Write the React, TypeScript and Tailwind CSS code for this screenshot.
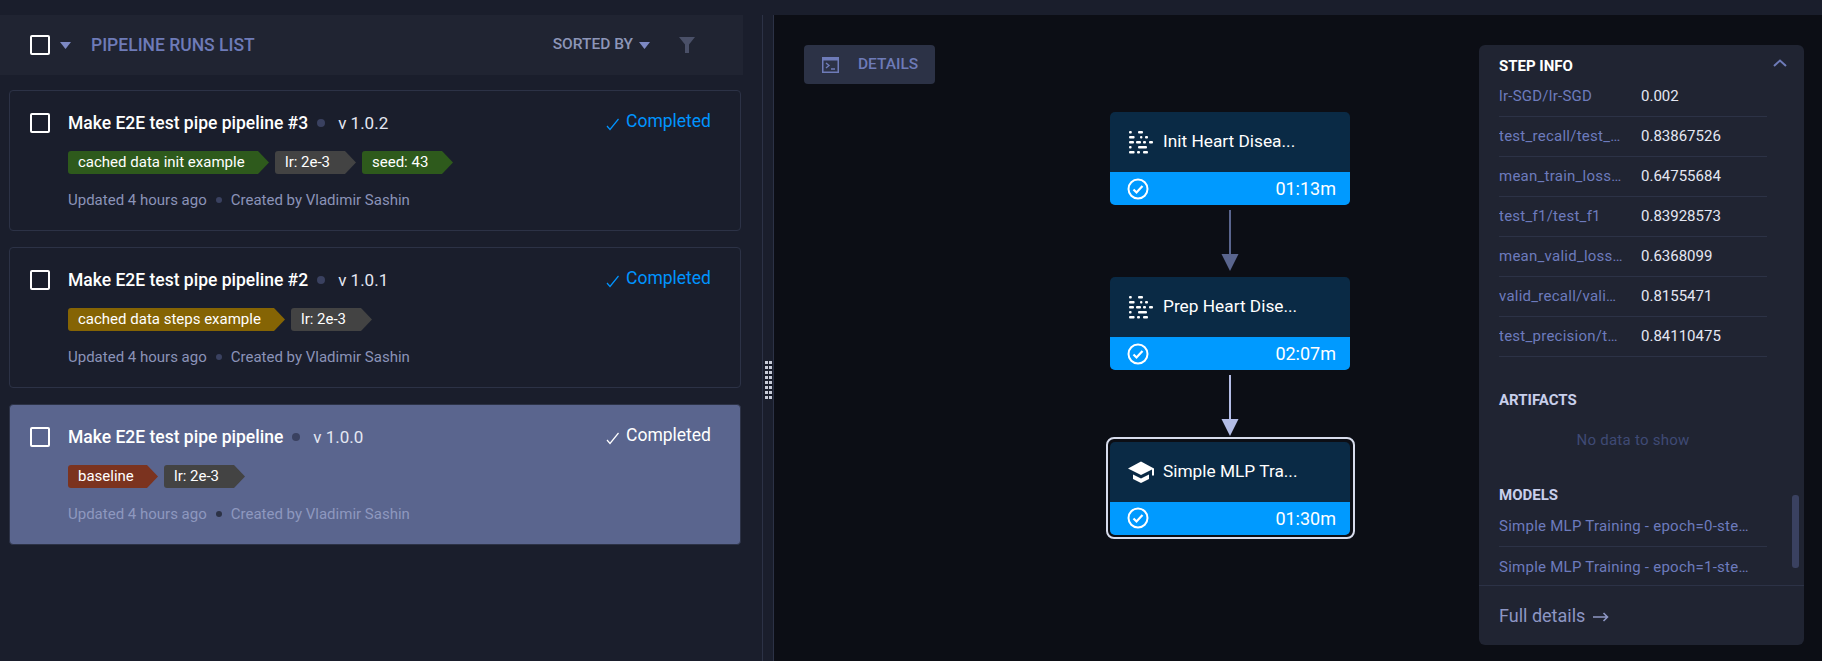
import React from "react";

const Check = ({ cls }: { cls: string }) => (
  <svg width="14" height="14" viewBox="0 0 14 14" className={cls} fill="none" stroke="currentColor" strokeWidth="1.2">
    <path d="M1 9l3 3.5L12.5 2" />
  </svg>
);

const Box = () => <span className="block w-[20px] h-[20px] border-2 border-white rounded-[2px] shrink-0" />;

const Caret = ({ cls }: { cls: string }) => (
  <svg width="11" height="7" viewBox="0 0 11 7" className={cls} fill="currentColor">
    <path d="M0 0h11L5.5 7z" />
  </svg>
);

type Tag = { t: string; w: string; c: string };

const Card = ({
  title, ver, tags, sel,
}: { title: string; ver: string; tags: Tag[]; sel?: boolean }) => (
  <div className={`h-[141px] rounded-[4px] border flex pl-[20px] pr-[29px] pt-[19px] ${sel ? "bg-[#5a658e] border-[#2c3246]" : "border-[#2c3246]"}`}>
    <div className="pt-[3px] w-[38px] shrink-0"><Box /></div>
    <div className="flex-1 min-w-0">
      <div className="flex items-start justify-between">
        <div className="flex items-center h-[24px] mt-[1px]">
          <span className="text-[17.5px] font-medium text-white leading-[24px]">{title}</span>
          <span className="w-[8px] h-[8px] rounded-full ml-[9px] mr-[13px] bg-[#3a4160]" />
          <span className="text-[17px] text-[#e4e7f2] leading-[24px]">{ver}</span>
        </div>
        <div className={`flex items-center h-[24px] -mt-[1px] ${sel ? "text-white" : "text-[#0094ff]"}`}>
          <Check cls="mr-[6px] mt-[5px]" />
          <span className="text-[17.5px] leading-[24px]">Completed</span>
        </div>
      </div>
      <div className="flex gap-[6px] mt-[16px]">
        {tags.map((g) => (
          <span
            key={g.t}
            className={`h-[23px] pl-[10px] flex items-center text-[15px] text-white rounded-l-[3px] [clip-path:polygon(0_0,calc(100%-11px)_0,100%_50%,calc(100%-11px)_100%,0_100%)] ${g.w} ${g.c}`}
          >
            {g.t}
          </span>
        ))}
      </div>
      <div className={`flex items-center h-[20px] mt-[16px] text-[15px] ${sel ? "text-[#8e98bf]" : "text-[#8b93b8]"}`}>
        <span>Updated 4 hours ago</span>
        <span className={`w-[6px] h-[6px] rounded-full mx-[9px] ${sel ? "bg-[#2c3246]" : "bg-[#3a4160]"}`} />
        <span>Created by Vladimir Sashin</span>
      </div>
    </div>
  </div>
);

const DataIcon = () => (
  <svg width="24" height="24" viewBox="0 0 24 24" fill="#fff" className="shrink-0">
    <rect x="0" y="1" width="2.8" height="2.4" rx="1" />
    <rect x="9" y="1" width="5" height="2.4" rx="1" />
    <rect x="0" y="6" width="5.6" height="2.4" rx="1" />
    <rect x="11" y="6" width="2.4" height="2.4" rx="1" />
    <rect x="16" y="6" width="3" height="2.4" rx="1" />
    <rect x="0" y="11" width="5" height="2.4" rx="1" />
    <rect x="7" y="11" width="5" height="2.4" rx="1" />
    <rect x="14" y="11" width="3" height="2.4" rx="1" />
    <rect x="20" y="11" width="4" height="2.4" rx="1" />
    <rect x="0" y="16" width="2.6" height="2.4" rx="1" />
    <rect x="9" y="16" width="9" height="2.4" rx="1" />
    <rect x="0" y="21" width="5.6" height="2.4" rx="1" />
    <rect x="8" y="21" width="3" height="2.4" rx="1" />
    <rect x="14" y="21" width="5" height="2.4" rx="1" />
  </svg>
);

const HatIcon = () => (
  <svg width="28" height="22" viewBox="0 0 28 22" fill="#fff" className="shrink-0">
    <path d="M14 0.5L1 7.5L14 14L25 8.5v6h2V7.5z" />
    <path d="M6 13.5v4.5L14 22L22 18v-4.5l-8 4z" />
  </svg>
);

const CircleCheck = () => (
  <svg width="22" height="22" viewBox="0 0 22 22" fill="none" stroke="#fff" strokeWidth="2" className="shrink-0">
    <circle cx="11" cy="11" r="9.5" />
    <path d="M6.5 11.5l3 3 6-6.5" strokeWidth="2.2" />
  </svg>
);

const Node = ({ label, time, hat }: { label: string; time: string; hat?: boolean }) => (
  <div className="w-[240px] h-[93px] rounded-[5px] overflow-hidden bg-[#0a2a45] flex flex-col shrink-0">
    <div className={`h-[60px] flex items-center text-white text-[17.3px] ${hat ? "pl-[17px]" : "pl-[19px]"}`}>
      <span className={`shrink-0 ${hat ? "w-[36px]" : "w-[34px]"}`}>{hat ? <HatIcon /> : <DataIcon />}</span>
      <span>{label}</span>
    </div>
    <div className="h-[33px] bg-[#009aff] flex items-center justify-between pl-[17px] pr-[14px] text-white text-[18px]">
      <CircleCheck />
      <span>{time}</span>
    </div>
  </div>
);

const Arrow = ({ cls, h }: { cls: string; h: number }) => (
  <svg width="18" height={h} viewBox={`0 0 18 ${h}`} className={`block ml-[115px] ${cls}`} fill="currentColor">
    <rect x="8" y="0" width="2" height={h - 15} />
    <path d={`M0.5 ${h - 17}h17L9 ${h}z`} />
  </svg>
);

const metrics: [string, string][] = [
  ["lr-SGD/lr-SGD", "0.002"],
  ["test_recall/test_recall", "0.83867526"],
  ["mean_train_loss/mean_train_loss", "0.64755684"],
  ["test_f1/test_f1", "0.83928573"],
  ["mean_valid_loss/mean_valid_loss", "0.6368099"],
  ["valid_recall/valid_recall", "0.8155471"],
  ["test_precision/test_precision", "0.84110475"],
];

export default function App() {
  return (
    <div className="w-[1822px] h-[661px] overflow-hidden flex flex-col bg-[#1a1e2c] font-['Roboto',sans-serif]">
      <div className="h-[15px] shrink-0 bg-[#1a1e2c]" />
      <div className="flex-1 flex min-h-0">
        <div className="w-[762px] shrink-0">
          <div className="w-[743px] h-[60px] bg-[#202432] flex items-center pl-[30px]">
            <Box />
            <Caret cls="text-[#7d89c4] ml-[10px]" />
            <span className="ml-[20px] text-[17.5px] font-medium text-[#6e7bb8]">PIPELINE RUNS LIST</span>
            <span className="ml-auto text-[15.5px] font-medium text-[#8d96b8]">SORTED BY</span>
            <Caret cls="text-[#7d89c4] ml-[6px]" />
            <svg width="16" height="16" viewBox="0 0 16 16" className="ml-[29px] mr-[48px] text-[#4a5068]" fill="currentColor">
              <path d="M0 0h16L10 7.5V16H6V7.5z" />
            </svg>
          </div>
          <div className="flex flex-col gap-[16px] pl-[9px] w-[741px] mt-[15px]">
            <Card
              title="Make E2E test pipe pipeline #3"
              ver="v 1.0.2"
              tags={[
                { t: "cached data init example", w: "w-[201px]", c: "bg-[#2e5a1c]" },
                { t: "lr: 2e-3", w: "w-[81px]", c: "bg-[#434343]" },
                { t: "seed: 43", w: "w-[91px]", c: "bg-[#2e5a1c]" },
              ]}
            />
            <Card
              title="Make E2E test pipe pipeline #2"
              ver="v 1.0.1"
              tags={[
                { t: "cached data steps example", w: "w-[217px]", c: "bg-[#856404]" },
                { t: "lr: 2e-3", w: "w-[81px]", c: "bg-[#434343]" },
              ]}
            />
            <Card
              sel
              title="Make E2E test pipe pipeline"
              ver="v 1.0.0"
              tags={[
                { t: "baseline", w: "w-[90px]", c: "bg-[#7b331f]" },
                { t: "lr: 2e-3", w: "w-[81px]", c: "bg-[#434343]" },
              ]}
            />
          </div>
        </div>

        <div className="w-[12px] shrink-0 border-x border-[#2c3246] flex items-start justify-center pt-[346px]">
          <div className="grid grid-cols-2 gap-x-[1px] gap-y-[2px]">
            {Array.from({ length: 16 }).map((_, i) => (
              <span key={i} className="w-[3px] h-[3px] bg-[#c8ccd8]" />
            ))}
          </div>
        </div>

        <div className="flex-1 bg-[#0c0e15] flex items-start pl-[30px] pt-[30px] min-w-0">
          <div className="w-[131px] h-[39px] rounded-[4px] bg-[#2c3246] flex items-center pl-[18px] shrink-0">
            <svg width="17" height="16" viewBox="0 0 17 16" className="text-[#6e7bb8]" fill="none" stroke="currentColor">
              <path d="M0 0h17v16H0z" fill="currentColor" stroke="none" />
              <path d="M1.5 3.5h14v11h-14z" fill="#2c3246" stroke="none" />
              <path d="M4 6l3 2.5L4 11M9 12h4" strokeWidth="1.4" />
            </svg>
            <span className="ml-[19px] text-[15.5px] font-medium text-[#6e7bb8]">DETAILS</span>
          </div>

          <div className="ml-[171px] w-[249px] mt-[67px] flex flex-col shrink-0">
            <div className="ml-[4px]"><Node label="Init Heart Disea..." time="01:13m" /></div>
            <Arrow cls="text-[#5a658e] mt-[5px] mb-[6px]" h={61} />
            <div className="ml-[4px]"><Node label="Prep Heart Dise..." time="02:07m" /></div>
            <Arrow cls="text-[#b4bde6] mt-[5px] mb-[1px]" h={61} />
            <div className="w-[249px] h-[102px] border-2 border-[#d8dcec] rounded-[8px] flex items-center pl-[2px]">
              <Node hat label="Simple MLP Tra..." time="01:30m" />
            </div>
          </div>

          <div className="relative ml-[124px] w-[325px] h-[600px] rounded-[6px] bg-[#202432] flex flex-col shrink-0">
            <div className="h-[540px] overflow-hidden pl-[20px]">
              <div className="h-[32px] mt-[5px] flex items-center text-[15px] font-bold text-white">STEP INFO</div>
              <div className="w-[268px] -mt-[5px]">
                {metrics.map(([k, v]) => (
                  <div key={k} className="h-[40px] flex items-center border-b border-[#2c3246] text-[15px] tracking-[0.25px]">
                    <span className="w-[125px] truncate text-[#6d7bbd] mr-[17px] shrink-0">{k}</span>
                    <span className="text-[#e4e7f2] tracking-[0px]">{v}</span>
                  </div>
                ))}
              </div>
              <div className="mt-[33px] text-[15px] font-bold text-[#c8cfeb] leading-[20px]">ARTIFACTS</div>
              <div className="w-[268px] mt-[20px] text-center text-[15px] tracking-[0.25px] text-[#3f4a75] leading-[20px]">No data to show</div>
              <div className="mt-[35px] text-[15px] font-bold text-[#c8cfeb] leading-[20px]">MODELS</div>
              <div className="w-[268px] mt-[2px]">
                <div className="h-[40px] flex items-center border-b border-[#2c3246] text-[15px] tracking-[0.25px] text-[#6d7bbd]">
                  <span className="truncate w-[252px]">Simple MLP Training - epoch=0-step=0.ckpt</span>
                </div>
                <div className="h-[40px] flex items-center text-[15px] tracking-[0.25px] text-[#6d7bbd]">
                  <span className="truncate w-[252px]">Simple MLP Training - epoch=1-step=1.ckpt</span>
                </div>
              </div>
            </div>
            <div className="border-t border-[#2c3246] flex-1 flex items-center pl-[20px] text-[18px] text-[#8d96c4]">
              Full details
              <svg width="16" height="10" viewBox="0 0 16 10" className="ml-[8px] mt-[2px]" fill="none" stroke="currentColor" strokeWidth="1.6">
                <path d="M0 5h14.5M10.5 1l4 4-4 4" />
              </svg>
            </div>
            <svg width="14" height="8" viewBox="0 0 14 8" className="absolute right-[17px] top-[14px] text-[#6e7bb8]" fill="none" stroke="currentColor" strokeWidth="2">
              <path d="M1 7l6-5.5L13 7" />
            </svg>
            <div className="absolute left-[313px] top-[450px] w-[7px] h-[73px] rounded-[3px] bg-[#3a4160]" />
          </div>
        </div>
      </div>
    </div>
  );
}
